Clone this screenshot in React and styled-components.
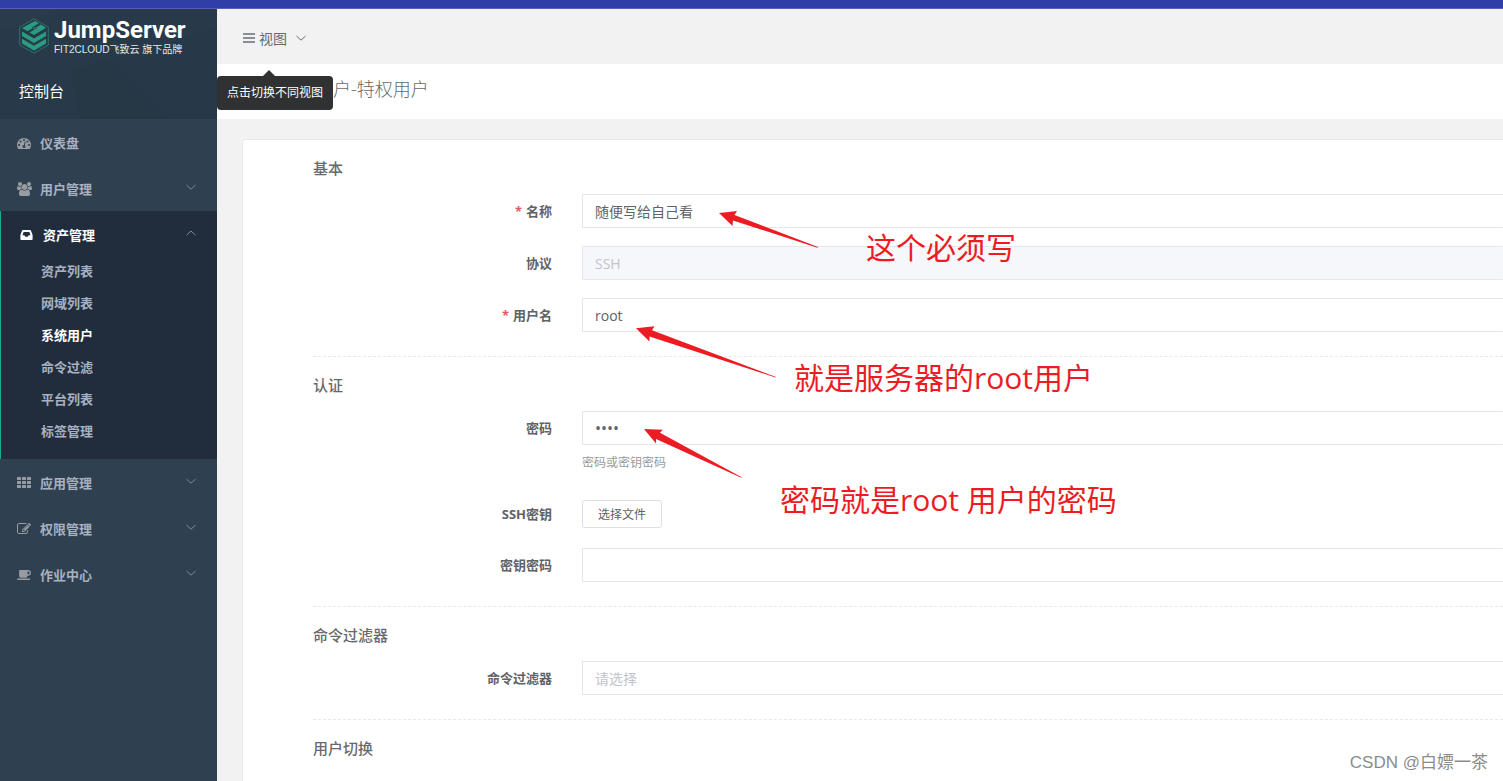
import React from 'react'
import styled, { createGlobalStyle, css } from 'styled-components'
import { FaCoffee } from 'react-icons/fa'

const dashboardPath = 'M384 1152q0-53-37.5-90.5t-90.5-37.5-90.5 37.5-37.5 90.5 37.5 90.5 90.5 37.5 90.5-37.5 37.5-90.5zm192-448q0-53-37.5-90.5t-90.5-37.5-90.5 37.5-37.5 90.5 37.5 90.5 90.5 37.5 90.5-37.5 37.5-90.5zm428 481l101-382q6-26-7.5-48.5t-38.5-29.5-48 6.5-30 39.5l-101 382q-60 5-107 43.5t-63 98.5q-20 77 20 146t117 89 146-20 89-117q16-60-6-117t-72-91zm660-33q0-53-37.5-90.5t-90.5-37.5-90.5 37.5-37.5 90.5 37.5 90.5 90.5 37.5 90.5-37.5 37.5-90.5zm-640-640q0-53-37.5-90.5t-90.5-37.5-90.5 37.5-37.5 90.5 37.5 90.5 90.5 37.5 90.5-37.5 37.5-90.5zm448 192q0-53-37.5-90.5t-90.5-37.5-90.5 37.5-37.5 90.5 37.5 90.5 90.5 37.5 90.5-37.5 37.5-90.5zm320 448q0 261-141 483-19 29-54 29h-1402q-35 0-54-29-141-221-141-483 0-182 71-348t191-286 286-191 348-71 348 71 286 191 191 286 71 348z'
const usersPath = 'M529 896q-162 5-265 128h-134q-82 0-138-40.5t-56-118.5q0-353 124-353 6 0 43.5 21t97.5 42.5 119 21.5q67 0 133-23-5 37-5 66 0 139 81 256zm1071 637q0 120-73 189.5t-194 69.5h-874q-121 0-194-69.5t-73-189.5q0-53 3.5-103.5t14-109 26.5-108.5 43-97.5 62-81 85.5-53.5 111.5-20q10 0 43 21.5t73 48 107 48 135 21.5 135-21.5 107-48 73-48 43-21.5q61 0 111.5 20t85.5 53.5 62 81 43 97.5 26.5 108.5 14 109 3.5 103.5zm-1024-1277q0 106-75 181t-181 75-181-75-75-181 75-181 181-75 181 75 75 181zm704 384q0 159-112.5 271.5t-271.5 112.5-271.5-112.5-112.5-271.5 112.5-271.5 271.5-112.5 271.5 112.5 112.5 271.5zm576 225q0 78-56 118.5t-138 40.5h-134q-103-123-265-128 81-117 81-256 0-29-5-66 66 23 133 23 59 0 119-21.5t97.5-42.5 43.5-21q124 0 124 353zm-128-609q0 106-75 181t-181 75-181-75-75-181 75-181 181-75 181 75 75 181z'
const editPath = 'M888 1184l116-116-152-152-116 116v56h96v96h56zm440-720q-16-16-33 1l-350 350q-17 17-1 33t33-1l350-350q17-17 1-33zm80 594v190q0 119-84.5 203.5t-203.5 84.5h-832q-119 0-203.5-84.5t-84.5-203.5v-832q0-119 84.5-203.5t203.5-84.5h832q63 0 117 25 15 7 18 23 3 17-9 29l-49 49q-14 14-32 8-23-6-45-6h-832q-66 0-113 47t-47 113v832q0 66 47 113t113 47h832q66 0 113-47t47-113v-126q0-13 9-22l64-64q15-15 35-7t20 29zm-96-738l288 288-672 672h-288v-288zm444 132l-92 92-288-288 92-92q28-28 68-28t68 28l152 152q28 28 28 68t-28 68z'

const DashboardIcon = () => <svg width="14" height="14" viewBox="0 0 1792 1792" fill="currentColor"><path d={dashboardPath} /></svg>
const UsersIcon = () => <svg width="15" height="14" viewBox="-64 0 1920 1792" fill="currentColor"><path d={usersPath} /></svg>
const EditIcon = () => <svg width="14" height="14" viewBox="0 0 1792 1792" fill="currentColor"><path d={editPath} /></svg>
const InboxIcon = () => (
    <svg width="13" height="14" viewBox="0 0 13 14" fill="currentColor">
        <path fillRule="evenodd" d="M2.9 2h7.2q.6 0 .8.5L12.6 7v4.3q0 .7-.7.7H1.1q-.7 0-.7-.7V7L2.1 2.500Q2.300 2 2.900 2zM3.600 4 2.400 7.200h2l.8 1.600h2.600l.8-1.600h2L9.400 4z" />
    </svg>
)
const GridIcon = () => (
    <svg width="14" height="14" viewBox="0 0 14 14" fill="currentColor">
        {[1, 5, 9].map((y) => [0, 5, 10].map((x) => (
            <rect key={`${x}-${y}`} x={x} y={y} width="4" height="3" rx=".5" />
        )))}
    </svg>
)
const Chevron = ({ up }) => (
    <svg width="12" height="8" viewBox="0 0 12 8" fill="none" stroke="currentColor">
        <path d={up ? 'M1.500 6.200 6 2l4.500 4.200' : 'M1.500 2 6 6.200 10.500 2'} />
    </svg>
)

const subMenu = ['资产列表', '网域列表', '系统用户', '命令过滤', '平台列表', '标签管理']
const menu = [
    { name: '仪表盘', icon: <DashboardIcon /> },
    { name: '用户管理', icon: <UsersIcon />, more: true },
    { name: '资产管理', icon: <InboxIcon />, more: true, children: subMenu },
    { name: '应用管理', icon: <GridIcon />, more: true },
    { name: '权限管理', icon: <EditIcon />, more: true },
    { name: '作业中心', icon: <FaCoffee />, more: true },
]

const Logo = () => (
    <Brand href="#">
        <svg width="30" height="36" viewBox="0 0 30 36">
            <path d="M15 .8 29.300 9v18L15 35.200.7 27V9z" fill="none" stroke="#2b8a78" strokeWidth=".7" />
            <g fill="#2b9c82">
                <path d="m16 3 4 2.300-7.500 4.400 2 1.200L22 6.600l5 3.200L15 17l-4.500-2.600L18 10l-2-1.100-7.500 4.300L3 10z" />
                <path d="m3 13.500 12 7 12-7v4.600l-12 7-12-7z" />
                <path d="m3 20.800 12 7 12-7v4.600l-12 7-12-7z" />
            </g>
        </svg>
        <BrandText>
            <strong>JumpServer</strong>
            <span>FIT2CLOUD飞致云 旗下品牌</span>
        </BrandText>
    </Brand>
)

const Sidebar = () => (
    <Side>
        <SideHeader>
            <Facets viewBox="0 0 217 110" preserveAspectRatio="none">
                <path d="M0 0h60L0 22z" fill="#2a3c4b" />
                <path d="M70 60 112 50 168 110H80z" fill="#263746" />
                <path d="m112 50 105-30v90h-49z" fill="#273948" />
            </Facets>
            <Logo />
            <Console>控制台</Console>
        </SideHeader>
        <nav>
            {menu.map((item) => (
                <Group key={item.name} $active={!!item.children}>
                    <MenuLink href="#" $active={!!item.children}>
                        <MenuIcon $active={!!item.children}>{item.icon}</MenuIcon>
                        <span>{item.name}</span>
                        {item.more && <Caret><Chevron up={!!item.children} /></Caret>}
                    </MenuLink>
                    {item.children && item.children.map((name) => (
                        <SubLink href="#" key={name} $current={name === '系统用户'}>{name}</SubLink>
                    ))}
                </Group>
            ))}
        </nav>
    </Side>
)

const Field = ({ id, label, required, children, top }) => (
    <Row $top={top}>
        <Label htmlFor={id} $top={top}>{required && <i>*</i>}{label}</Label>
        <Control>{children}</Control>
    </Row>
)

// red pen marks drawn over the form
const Notes = () => (
    <>
        <Arrows width="1120" height="500" viewBox="0 0 1120 500" fill="#ed1c24">
            <path d="m719 213 18-2-2.500 4L818 247l-.5.800L733 220.500l-.5 5.500z" />
            <path d="m636 328.300 18.500-2-2.500 4 124 46.700-.5.500-126-41v5z" />
            <path d="m644 429 18.800.700-2.800 3 81.700 44.500-.5.600L656 439v4.500z" />
        </Arrows>
        <Note $x={866} $y={228}>这个必须写</Note>
        <Note $x={794} $y={358}>就是服务器的root用户</Note>
        <Note $x={780} $y={480}>密码就是root 用户的密码</Note>
    </>
)

const App = () => (
    <Page>
        <Global />
        <Strip />
        <Body>
            <Sidebar />
            <Main>
                <Navbar>
                    <ViewButton type="button">
                        <svg width="12" height="12" viewBox="0 0 12 12" fill="#8b8e94">
                            <path d="M0 1h12v2H0zM0 5h12v2H0zM0 9h12v2H0z" />
                        </svg>
                        <span>视图</span>
                        <Chevron />
                    </ViewButton>
                    <Tooltip role="tooltip">点击切换不同视图</Tooltip>
                </Navbar>
                <Heading>创建系统用户-特权用户</Heading>
                <Card>
                    <Section>
                        <h3>基本</h3>
                        <Field id="name" label="名称" required>
                            <Input id="name" defaultValue="随便写给自己看" />
                        </Field>
                        <Field id="protocol" label="协议">
                            <Input id="protocol" defaultValue="SSH" disabled />
                        </Field>
                        <Field id="username" label="用户名" required>
                            <Input id="username" defaultValue="root" />
                        </Field>
                    </Section>
                    <Section>
                        <h3>认证</h3>
                        <Field id="password" label="密码" top>
                            <PasswordInput id="password" type="password" defaultValue="root" />
                            <Hint>密码或密钥密码</Hint>
                        </Field>
                        <Field id="key" label="SSH密钥">
                            <FileButton id="key" type="button">选择文件</FileButton>
                        </Field>
                        <Field id="passphrase" label="密钥密码">
                            <PasswordInput id="passphrase" type="password" />
                        </Field>
                    </Section>
                    <Section>
                        <h3>命令过滤器</h3>
                        <Field id="filter" label="命令过滤器">
                            <Select id="filter"><option>请选择</option></Select>
                        </Field>
                    </Section>
                    <Section>
                        <h3>用户切换</h3>
                    </Section>
                </Card>
            </Main>
        </Body>
        <Notes />
        <Watermark>CSDN @白嫖一茶</Watermark>
    </Page>
)

export default App

const Global = createGlobalStyle`
    * {
        box-sizing: border-box;
    }
    body {
        margin: 0;
        font-family: "Open Sans", "Noto Sans CJK SC", sans-serif;
        font-size: 13px;
        color: #676a6c;
    }
    a {
        text-decoration: none;
    }
    button, input, select {
        font-family: inherit;
    }
`
const Page = styled.div`
    position: relative;
    height: 100vh;
    display: flex;
    flex-direction: column;
    overflow: hidden;
`
const Strip = styled.div`
    flex: none;
    height: 9px;
    background: #303fa8;
    border-bottom: 1px solid #5561b5;
`
const Body = styled.div`
    flex: 1;
    min-height: 0;
    display: flex;
`
const Side = styled.aside`
    flex: none;
    width: 217px;
    background: #2f4050;
`
const SideHeader = styled.div`
    position: relative;
    height: 110px;
    padding: 9px 19px 0;
    background: #283a49;
`
const Facets = styled.svg`
    position: absolute;
    inset: 0;
    width: 100%;
    height: 100%;
`
const Brand = styled.a`
    position: relative;
    display: flex;
    gap: 5px;
    color: #fff;
`
const BrandText = styled.div`
    display: flex;
    flex-direction: column;
    white-space: nowrap;
    strong {
        font: 700 24px/25px Roboto, sans-serif;
    }
    span {
        font: 10px/14px "Liberation Sans", "Noto Sans CJK SC", sans-serif;
        color: #e4e8eb;
    }
`
const Console = styled.div`
    position: relative;
    margin-top: 24px;
    font-size: 15px;
    line-height: 20px;
    color: #fff;
`
const Group = styled.div`
    ${({ $active }) => $active && css`
        padding-bottom: 12px;
        background: #212d3c;
        border-left: 1px solid #19aa8d;
    `}
`
const MenuLink = styled.a`
    display: flex;
    align-items: center;
    height: ${({ $active }) => ($active ? '44px' : '46px')};
    padding: ${({ $active }) => ($active ? '2px 20px 0 19px' : '0 20px 0 17px')};
    font-weight: 700;
    color: ${({ $active }) => ($active ? '#fff' : '#a7b1c2')};
`
const MenuIcon = styled.span`
    display: flex;
    width: 23px;
    padding-top: 2px;
    font-size: 14px;
    color: ${({ $active }) => ($active ? '#fff' : '#979ca3')};
`
const Caret = styled.span`
    display: flex;
    margin-left: auto;
    padding-bottom: 2px;
    color: #7f8995;
`
const SubLink = styled.a`
    display: block;
    padding-left: 40px;
    font-weight: 700;
    line-height: 32px;
    color: ${({ $current }) => ($current ? '#fff' : '#a7b1c2')};
`
const Main = styled.main`
    flex: 1;
    min-width: 0;
    background: #f2f2f2;
`
const Navbar = styled.div`
    position: relative;
    display: flex;
    align-items: center;
    height: 55px;
    padding: 2px 26px 0;
`
const ViewButton = styled.button`
    display: flex;
    align-items: center;
    padding: 0;
    border: 0;
    background: none;
    font-size: 14px;
    color: #676a6c;
    span {
        margin: 0 8px 0 4px;
    }
`
const Tooltip = styled.div`
    position: absolute;
    z-index: 1;
    top: 67px;
    left: 0;
    padding: 8px 10px;
    border-radius: 4px;
    background: #303133;
    font-size: 12px;
    line-height: 18px;
    color: #fff;
    &::before {
        content: '';
        position: absolute;
        left: 46px;
        bottom: 100%;
        border: 6px solid transparent;
        border-top: 0;
        border-bottom-color: #303133;
    }
`
const Heading = styled.h2`
    margin: 0 0 20px;
    padding: 0 26px 4px;
    background: #fff;
    font-size: 18px;
    font-weight: 300;
    line-height: 51px;
`
const Card = styled.form`
    margin-left: 25px;
    padding-left: 70px;
    border: 1px solid #e7eaec;
    border-right: 0;
    border-radius: 4px 0 0 0;
    background: #fff;
`
const Section = styled.section`
    padding-bottom: 24px;
    & + & {
        border-top: 1px dashed #e7eaec;
    }
    h3 {
        margin: 0;
        padding: 6px 0 4px;
        font-size: 15px;
        font-weight: 500;
        line-height: 44px;
    }
`
const Row = styled.div`
    display: flex;
    align-items: ${({ $top }) => ($top ? 'flex-start' : 'center')};
    & + & {
        margin-top: 18px;
    }
`
const Label = styled.label`
    flex: none;
    width: 269px;
    padding-right: 30px;
    font-weight: 700;
    line-height: ${({ $top }) => ($top ? '34px' : '32px')};
    text-align: right;
    color: #606266;
    i {
        margin-right: 4px;
        font-style: normal;
        color: #ed5565;
    }
`
const Control = styled.div`
    flex: 1;
    min-width: 0;
`
const box = css`
    display: block;
    width: 100%;
    height: 34px;
    padding: 0 12px;
    border: 1px solid #e5e6e7;
    border-right: 0;
    border-radius: 1px;
    background: #fff;
    font-size: 14px;
    color: #606266;
`
const Input = styled.input`
    ${box}
    &:disabled {
        background: #f5f7fa;
        border-color: #e4e7ed;
        color: #c0c4cc;
    }
`
const PasswordInput = styled(Input)`
    font-size: 16px;
`
const Select = styled.select`
    ${box}
    appearance: none;
    color: #c0c4cc;
`
const Hint = styled.p`
    margin: 9px 0 8px;
    font-size: 12px;
    line-height: 18px;
    color: #999;
`
const FileButton = styled.button`
    display: block;
    height: 28px;
    padding: 0 15px;
    border: 1px solid #dcdfe6;
    border-radius: 3px;
    background: #fff;
    font-size: 12px;
    color: #606266;
`
const Arrows = styled.svg`
    position: absolute;
    top: 0;
    left: 0;
    pointer-events: none;
`
const Note = styled.span`
    position: absolute;
    left: ${({ $x }) => $x}px;
    top: ${({ $y }) => $y}px;
    font-size: 30px;
    line-height: 40px;
    white-space: nowrap;
    color: #ed1c24;
`
const Watermark = styled.span`
    position: absolute;
    right: 15px;
    bottom: 6px;
    font: 17px/24px "Liberation Sans", "Noto Sans CJK SC", sans-serif;
    color: #8c8c8c;
`
